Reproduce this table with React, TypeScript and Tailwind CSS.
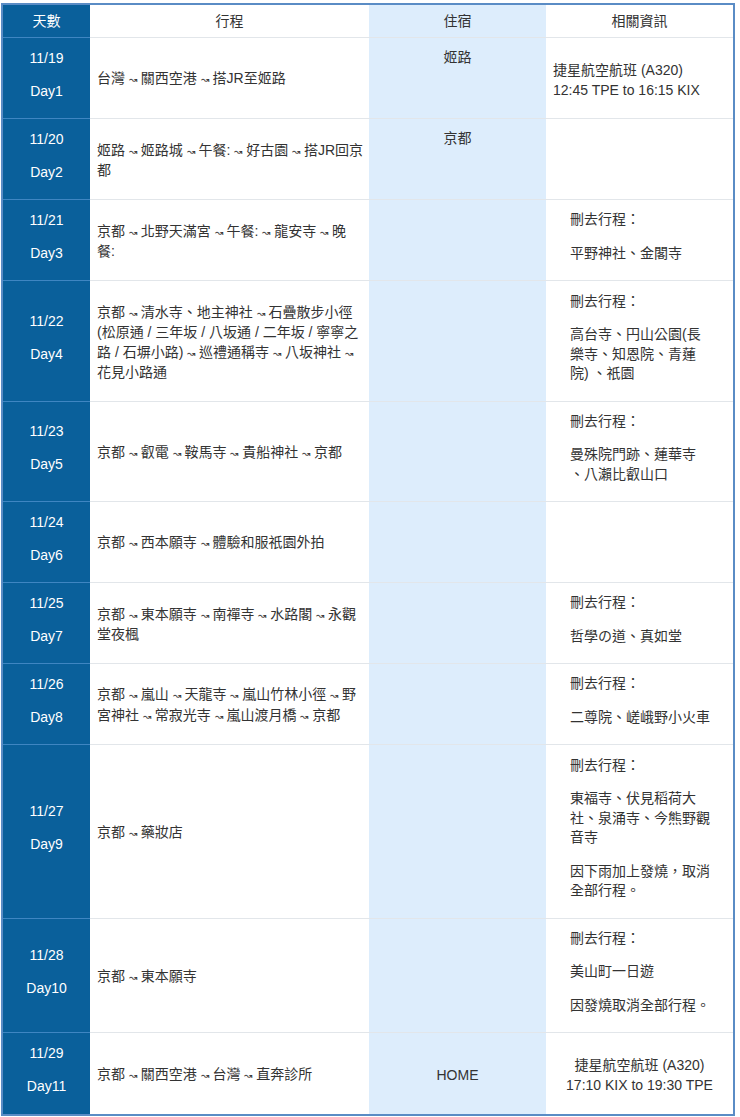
import React from "react"

type Row = {
  date: string
  day: string
  h: string
  itin: string[]
  hotel?: string
  hotelMiddle?: boolean
  flight?: string[]
  flightCenter?: boolean
  info?: string[][]
}

const rows: Row[] = [
  {
    date: "11/19",
    day: "Day1",
    h: "h-[81px]",
    itin: ["台灣 ~ 關西空港 ~ 搭JR至姬路"],
    hotel: "姬路",
    flight: ["捷星航空航班 (A320)", "12:45 TPE to 16:15 KIX"],
  },
  {
    date: "11/20",
    day: "Day2",
    h: "h-[81px]",
    itin: ["姬路 ~ 姬路城 ~ 午餐: ~ 好古園 ~ 搭JR回京", "都"],
    hotel: "京都",
  },
  {
    date: "11/21",
    day: "Day3",
    h: "h-[81px]",
    itin: ["京都 ~ 北野天滿宮 ~ 午餐: ~ 龍安寺 ~ 晚", "餐:"],
    info: [["刪去行程："], ["平野神社、金閣寺"]],
  },
  {
    date: "11/22",
    day: "Day4",
    h: "h-[121px]",
    itin: [
      "京都 ~ 清水寺、地主神社 ~ 石疊散步小徑",
      "(松原通 / 三年坂 / 八坂通 / 二年坂 / 寧寧之",
      "路 / 石塀小路) ~ 巡禮通稱寺 ~ 八坂神社 ~",
      "花見小路通",
    ],
    info: [["刪去行程："], ["高台寺、円山公園(長", "樂寺、知恩院、青蓮", "院) 、祇園"]],
  },
  {
    date: "11/23",
    day: "Day5",
    h: "h-[100px]",
    itin: ["京都 ~ 叡電 ~ 鞍馬寺 ~ 貴船神社 ~ 京都"],
    info: [["刪去行程："], ["曼殊院門跡、蓮華寺", "、八瀨比叡山口"]],
  },
  {
    date: "11/24",
    day: "Day6",
    h: "h-[81px]",
    itin: ["京都 ~ 西本願寺 ~ 體驗和服祇園外拍"],
  },
  {
    date: "11/25",
    day: "Day7",
    h: "h-[81px]",
    itin: ["京都 ~ 東本願寺 ~ 南禪寺 ~ 水路閣 ~ 永觀", "堂夜楓"],
    info: [["刪去行程："], ["哲學の道、真如堂"]],
  },
  {
    date: "11/26",
    day: "Day8",
    h: "h-[81px]",
    itin: ["京都 ~ 嵐山 ~ 天龍寺 ~ 嵐山竹林小徑 ~ 野", "宮神社 ~ 常寂光寺 ~ 嵐山渡月橋 ~ 京都"],
    info: [["刪去行程："], ["二尊院、嵯峨野小火車"]],
  },
  {
    date: "11/27",
    day: "Day9",
    h: "h-[174px]",
    itin: ["京都 ~ 藥妝店"],
    info: [
      ["刪去行程："],
      ["東福寺、伏見稻荷大", "社、泉涌寺、今熊野觀", "音寺"],
      ["因下雨加上發燒，取消", "全部行程。"],
    ],
  },
  {
    date: "11/28",
    day: "Day10",
    h: "h-[114px]",
    itin: ["京都 ~ 東本願寺"],
    info: [["刪去行程："], ["美山町一日遊"], ["因發燒取消全部行程。"]],
  },
  {
    date: "11/29",
    day: "Day11",
    h: "h-[81px]",
    itin: ["京都 ~ 關西空港 ~ 台灣 ~ 直奔診所"],
    hotel: "HOME",
    hotelMiddle: true,
    flight: ["捷星航空航班 (A320)", "17:10 KIX to 19:30 TPE"],
    flightCenter: true,
  },
]

// "~" marks the small squiggle arrow between stops
function Line({ text }: { text: string }) {
  const parts = text.split("~")
  return (
    <div className="whitespace-nowrap">
      {parts.map((p, i) => (
        <React.Fragment key={i}>
          {p}
          {i < parts.length - 1 && <span className="text-[10px]">↝</span>}
        </React.Fragment>
      ))}
    </div>
  )
}

export default function App() {
  return (
    <div
      className="ml-[1px] mt-[3px] w-[734px] border-2 border-[#5a8cc5] bg-white text-[14px] text-[#333]"
      style={{ fontFamily: '"Liberation Sans", "Noto Sans CJK TC", sans-serif' }}
    >
      <div className="grid grid-cols-[87px_279px_177px_187px]">
        {/* header */}
        <div className="flex h-[33px] items-center justify-center border-b border-[#3f86c2] bg-[#0a609b] text-white">
          天數
        </div>
        <div className="flex h-[33px] items-center justify-center border-b border-[#e2e6ea]">行程</div>
        <div className="flex h-[33px] items-center justify-center border-b border-[#e2e6ea] bg-[#ddedfc]">
          住宿
        </div>
        <div className="flex h-[33px] items-center justify-center border-b border-[#e2e6ea]">相關資訊</div>

        {rows.map((r, idx) => {
          const last = idx === rows.length - 1
          const b = last ? "" : "border-b border-[#e2e6ea]"
          return (
            <React.Fragment key={r.date}>
              <div
                className={`flex flex-col items-center justify-center bg-[#0a609b] pt-[2px] leading-5 text-white ${r.h} ${
                  last ? "" : "border-b border-[#3f86c2]"
                }`}
              >
                <div>{r.date}</div>
                <div className="mb-[10px] mt-[13px]">{r.day}</div>
              </div>
              <div className={`flex flex-col justify-center px-[7px] pt-[3px] leading-[19.5px] ${b}`}>
                {r.itin.map((t, i) => (
                  <Line key={i} text={t} />
                ))}
              </div>
              <div
                className={`flex flex-col items-center bg-[#ddedfc] leading-5 ${b} ${
                  r.hotelMiddle ? "justify-center pt-[2px]" : "justify-start pt-[9px]"
                }`}
              >
                {r.hotel}
              </div>
              <div className={`flex flex-col justify-center pt-[3px] leading-5 ${b}`}>
                {r.flight && (
                  <div className={r.flightCenter ? "text-center" : "pl-[7px]"}>
                    {r.flight.map((f) => (
                      <div key={f}>{f}</div>
                    ))}
                  </div>
                )}
                {r.info && (
                  <div className="flex flex-col gap-[14px] pb-[10px] pl-[24px] leading-[19.5px]">
                    {r.info.map((para, i) => (
                      <div key={i}>
                        {para.map((l) => (
                          <div key={l}>{l}</div>
                        ))}
                      </div>
                    ))}
                  </div>
                )}
              </div>
            </React.Fragment>
          )
        })}
      </div>
    </div>
  )
}
